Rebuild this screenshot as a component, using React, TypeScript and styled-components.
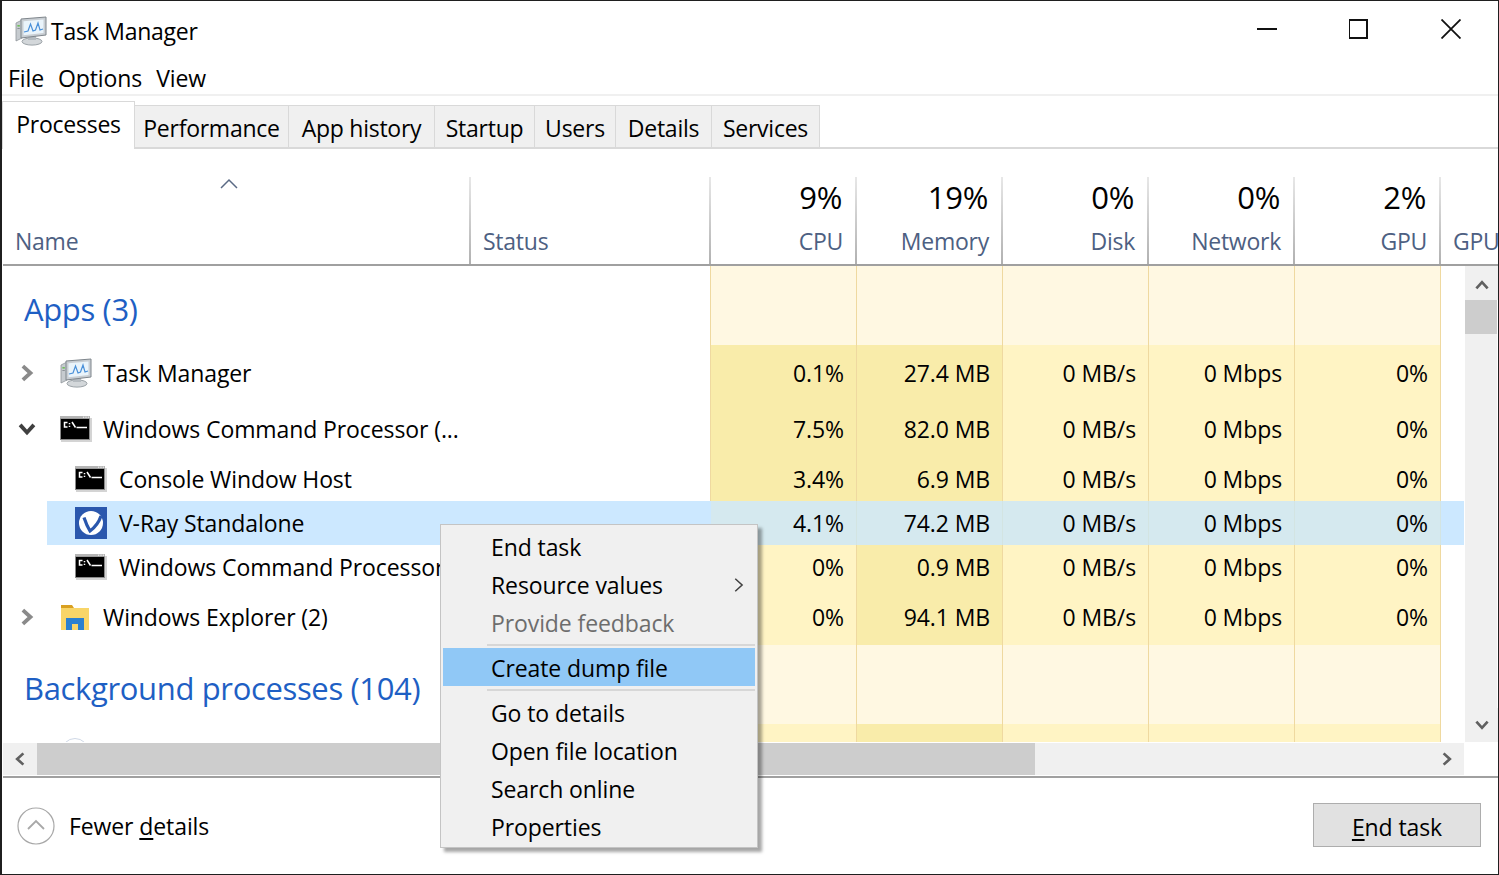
import React, { FC } from "react";
import styled, { createGlobalStyle } from "styled-components";

const GlobalStyle = createGlobalStyle`
  html, body {
    margin: 0;
    padding: 0;
    background: #fff;
  }
  * {
    box-sizing: border-box;
  }
`;

const COLUMNS = "468px 240px 146px 146px 146px 146px 146px 24px";

const Window = styled.div`
  position: relative;
  width: 1499px;
  height: 875px;
  display: flex;
  flex-direction: column;
  border: 1px solid #1f1f1f;
  border-left-width: 2px;
  background: #fff;
  overflow: hidden;
  font-family: "Open Sans", "Noto Sans", sans-serif;
  font-size: 23px;
  letter-spacing: -0.1px;
  color: #000;
`;

const TitleBar = styled.div`
  height: 59px;
  flex: none;
  display: flex;
  align-items: center;
  padding: 0 0 0 13px;
`;

const TitleText = styled.span`
  margin-left: 4px;
  letter-spacing: -0.25px;
`;

const WindowButtons = styled.div`
  margin-left: auto;
  margin-right: 1px;
  margin-bottom: 3px;
  display: flex;
`;

const WindowButton = styled.div`
  width: 92px;
  height: 40px;
  display: flex;
  align-items: center;
  justify-content: center;
`;

const MenuBar = styled.div`
  height: 36px;
  flex: none;
  display: flex;
  gap: 14px;
  padding: 2px 0 0 6px;
  align-items: center;
  border-bottom: 2px solid #f0f0f0;
`;

const TabStrip = styled.div`
  height: 53px;
  flex: none;
  display: flex;
  align-items: flex-end;
  border-bottom: 2px solid #d9d9d9;
  letter-spacing: -0.25px;
`;

const Tab = styled.div<{ $active?: boolean; $width: number }>`
  width: ${p => p.$width}px;
  height: ${p => (p.$active ? "48px" : "42px")};
  flex: none;
  display: flex;
  align-items: center;
  justify-content: center;
  background: ${p => (p.$active ? "#fff" : "#f0f0f0")};
  border-top: 1px solid #d9d9d9;
  border-right: 1px solid #d9d9d9;
  border-left: ${p => (p.$active ? "1px solid #d9d9d9" : "0")};
  margin-bottom: ${p => (p.$active ? "-2px" : "0")};
  padding-top: ${p => (p.$active ? "0" : "3px")};
  padding-bottom: ${p => (p.$active ? "3px" : "0")};
`;

const Header = styled.div`
  height: 117px;
  flex: none;
  display: grid;
  grid-template-columns: ${COLUMNS};
  border-bottom: 2px solid #a0a0a0;
  margin-left: 1px;
  padding-top: 28px;
  overflow: hidden;
  letter-spacing: -0.25px;
`;

const HeaderCell = styled.div<{ $right?: boolean; $noLine?: boolean }>`
  position: relative;
  display: flex;
  flex-direction: column;
  justify-content: flex-end;
  align-items: ${p => (p.$right ? "flex-end" : "flex-start")};
  padding: 0 12px 7px 12px;
  border-right: ${p => (p.$noLine ? "0" : "2px solid transparent")};
  border-image: ${p => (p.$noLine ? "none" : "linear-gradient(#e8e8e8, #b0b0b0) 1")};
  color: #4d6082;
  white-space: nowrap;
`;

const SortArrow = styled.svg`
  position: absolute;
  left: 216px;
  top: 1px;
`;

const Percent = styled.div`
  font-size: 31px;
  letter-spacing: -0.3px;
  color: #000;
  line-height: 40px;
  margin: 0 1px 8px 0;
`;

const Body = styled.div`
  flex: 1;
  min-height: 0;
  display: flex;
  margin-left: 1px;
`;

const RowsArea = styled.div`
  width: 1462px;
  flex: none;
  overflow: hidden;
  display: flex;
  flex-direction: column;
`;

const Row = styled.div<{ $height: number }>`
  height: ${p => p.$height}px;
  flex: none;
  display: grid;
  grid-template-columns: ${COLUMNS};
`;

const NameCell = styled.div<{ $indent: number; $selected?: boolean }>`
  grid-column: span 2;
  display: flex;
  align-items: center;
  white-space: nowrap;
  overflow: hidden;
  padding-left: ${p => p.$indent}px;
  border-right: 1px solid ${p => (p.$selected ? "#cce8ff" : "#efd9a0")};
  background: ${p =>
    p.$selected ? "linear-gradient(to right, #fff 44px, #cce8ff 44px)" : "#fff"};
`;

const GroupTitle = styled.div`
  grid-column: span 2;
  display: flex;
  align-items: center;
  padding: 7px 0 0 21px;
  font-size: 31px;
  letter-spacing: -0.35px;
  color: #1e5fc4;
  border-right: 1px solid #efd9a0;
`;

type Tone = "light" | "mid" | "strong" | "selected";

const TONES: Record<Tone, string> = {
  light: "#fff8e2",
  mid: "#fff4c4",
  strong: "#f9ecaa",
  selected: "#d5e9ef",
};

const HeatCell = styled.div<{ $tone: Tone }>`
  display: flex;
  align-items: center;
  justify-content: flex-end;
  padding-right: 12px;
  border-right: 1px solid ${p => (p.$tone === "selected" ? "#d3e4e2" : "#efd9a0")};
  background: ${p => TONES[p.$tone]};
  white-space: nowrap;
`;

const Twisty = styled.div`
  width: 44px;
  margin-left: 13px;
  display: flex;
  flex: none;
  align-items: center;
`;

const IconSlot = styled.div<{ $width: number }>`
  width: ${p => p.$width}px;
  flex: none;
  display: flex;
  align-items: center;
`;

const EdgeCell = styled.div<{ $selected?: boolean }>`
  margin-right: 1px;
  background: ${p => (p.$selected ? "#cce8ff" : "#fff")};
`;

const VScroll = styled.div`
  width: 32px;
  flex: none;
  display: flex;
  flex-direction: column;
  background: #f0f0f0;
`;

const ScrollButton = styled.div<{ $width: number; $height: number; $pushDown?: boolean }>`
  width: ${p => p.$width}px;
  height: ${p => p.$height}px;
  flex: none;
  background: #f0f0f0;
  display: flex;
  align-items: center;
  justify-content: center;
  padding-top: ${p => (p.$pushDown ? "4px" : "0")};
`;

const VTrack = styled.div`
  flex: 1;
  display: flex;
  flex-direction: column;
`;

const VThumb = styled.div`
  height: 34px;
  background: #cdcdcd;
`;

const HScrollBar = styled.div`
  height: 32px;
  flex: none;
  display: flex;
  margin-left: 1px;
  margin-top: 1px;
`;

const HTrack = styled.div`
  width: 1393px;
  background: #f0f0f0;
  display: flex;
`;

const HThumb = styled.div`
  width: 998px;
  background: #cdcdcd;
`;

const Footer = styled.div`
  height: 98px;
  flex: none;
  display: flex;
  align-items: center;
  margin-left: 1px;
  margin-top: 1px;
  border-top: 2px solid #a0a0a0;
  padding: 0 17px 0 14px;
`;

const FooterToggle = styled.div`
  display: flex;
  align-items: center;
  gap: 14px;
`;

const FooterButton = styled.div`
  margin: 0 0 2px auto;
  width: 168px;
  height: 44px;
  padding-top: 3px;
  display: flex;
  align-items: center;
  justify-content: center;
  background: #e1e1e1;
  border: 1px solid #adadad;
`;

const Access = styled.span`
  text-decoration: underline;
  text-underline-offset: 3px;
`;

const ContextMenu = styled.div`
  position: absolute;
  left: 438px;
  top: 523px;
  width: 318px;
  height: 324px;
  background: #f0f0f0;
  border: 1px solid #c4c4c4;
  box-shadow: 4px 4px 3px rgba(0, 0, 0, 0.35);
  padding: 2px;
`;

const MenuItem = styled.div<{ $disabled?: boolean; $hot?: boolean }>`
  height: 38px;
  display: flex;
  align-items: center;
  justify-content: space-between;
  padding: 2px 6px 0 48px;
  color: ${p => (p.$disabled ? "#6d6d6d" : "#000")};
  background: ${p => (p.$hot ? "#90c8f6" : "transparent")};
`;

const MenuSeparator = styled.div<{ $top: number }>`
  height: 2px;
  margin: ${p => p.$top}px 0 2px 44px;
  background: #d7d7d7;
`;

const Chevron: FC<{ dir: "up" | "down" | "left" | "right"; color?: string; size?: number; width?: number }> = ({
  dir,
  color = "#606060",
  size = 18,
  width = 2.4,
}) => {
  const points = {
    up: "3,11 8,5.5 13,11",
    down: "3,5 8,10.5 13,5",
    left: "11,3 5.5,8 11,13",
    right: "5,3 10.5,8 5,13",
  }[dir];
  return (
    <svg width={size} height={size} viewBox="0 0 16 16">
      <polyline points={points} fill="none" stroke={color} strokeWidth={width} />
    </svg>
  );
};

const MonitorIcon: FC = () => (
  <svg width="32" height="30" viewBox="0 0 32 30">
    <ellipse cx="17" cy="25.5" rx="10" ry="3.6" fill="#d3d7da" stroke="#9aa1a6" />
    <rect x="13" y="19" width="8" height="5" fill="#b4babf" />
    <path d="M1 7 L7 4 V22 L1 25 Z" fill="#c6cbcf" stroke="#8f969b" strokeWidth="0.8" />
    <rect x="2.4" y="9" width="2.4" height="1.6" fill="#6fbf5a" />
    <rect x="2.4" y="12" width="2.4" height="1" fill="#8a9095" />
    <path d="M6 3 L31 1 V19 L6 22 Z" fill="#c9ced3" stroke="#7f868c" />
    <path d="M8.5 5.2 L28.5 3.6 V17 L8.5 19.2 Z" fill="#eaf4fb" />
    <polyline
      points="9,16 13,15 15.5,8 18,15 20.5,14 23,7 25,14 28,13"
      fill="none"
      stroke="#4a90d9"
      strokeWidth="1.2"
    />
  </svg>
);

const ConsoleIcon: FC = () => (
  <svg width="32" height="26" viewBox="0 0 32 26">
    <rect x="1" y="2" width="31" height="24" fill="#d4d4d4" />
    <rect x="0" y="0" width="30" height="24" fill="#8a8a8a" />
    <rect x="0" y="0" width="30" height="2.4" fill="#b5b5b5" />
    <rect x="1" y="3" width="28" height="20" fill="#000" />
    <rect x="23" y="0.6" width="1.2" height="1.2" fill="#eee" />
    <rect x="25.4" y="0.6" width="1.2" height="1.2" fill="#eee" />
    <rect x="27.8" y="0.6" width="1.2" height="1.2" fill="#eee" />
    <path
      d="M7.5 6.5 H4.5 V11 H7.5 M9.5 7 V8.2 M9.5 9.8 V11 M12 6 L15.5 11.5 M16.5 11.5 H27"
      fill="none"
      stroke="#fff"
      strokeWidth="1.5"
    />
  </svg>
);

const VRayIcon: FC = () => (
  <svg width="32" height="32" viewBox="0 0 32 32">
    <rect width="32" height="32" fill="#2a57ad" />
    <circle cx="16" cy="16" r="12" fill="#fff" />
    <path d="M9 10.5 C10.5 15 12.5 20 15 24 C19 21 24 15 26 9" fill="none" stroke="#2a57ad" strokeWidth="3.2" />
  </svg>
);

const FolderIcon: FC = () => (
  <svg width="30" height="26" viewBox="0 0 30 26">
    <path d="M1 1 H12 L14 4 H1 Z" fill="#d9a021" />
    <rect x="1" y="4" width="28" height="22" fill="#f8d568" />
    <path d="M6 26 V14 H24 V26 H18 V20 H12 V26 Z" fill="#2a80d0" />
  </svg>
);

const CircleIcon: FC = () => (
  <svg width="30" height="30" viewBox="0 0 30 30">
    <circle cx="15" cy="15" r="13.5" fill="#fff" stroke="#cfd8e6" />
    <path d="M9 6 H11 M14 6 H16 M19 6 H21" stroke="#a8d8c0" strokeWidth="1.2" />
  </svg>
);

type Kind = "monitor" | "console" | "vray" | "folder" | "circle";

const ICONS: Record<Kind, FC> = {
  monitor: MonitorIcon,
  console: ConsoleIcon,
  vray: VRayIcon,
  folder: FolderIcon,
  circle: CircleIcon,
};

type Process = {
  name: string;
  height: number;
  icon: Kind;
  twisty?: "right" | "down";
  child?: boolean;
  selected?: boolean;
  values: string[];
};

const processes: Process[] = [
  { name: "Task Manager", height: 56, icon: "monitor", twisty: "right", values: ["0.1%", "27.4 MB", "0 MB/s", "0 Mbps", "0%"] },
  { name: "Windows Command Processor (...", height: 56, icon: "console", twisty: "down", values: ["7.5%", "82.0 MB", "0 MB/s", "0 Mbps", "0%"] },
  { name: "Console Window Host", height: 44, icon: "console", child: true, values: ["3.4%", "6.9 MB", "0 MB/s", "0 Mbps", "0%"] },
  { name: "V-Ray Standalone", height: 44, icon: "vray", child: true, selected: true, values: ["4.1%", "74.2 MB", "0 MB/s", "0 Mbps", "0%"] },
  { name: "Windows Command Processor", height: 44, icon: "console", child: true, values: ["0%", "0.9 MB", "0 MB/s", "0 Mbps", "0%"] },
  { name: "Windows Explorer (2)", height: 56, icon: "folder", twisty: "right", values: ["0%", "94.1 MB", "0 MB/s", "0 Mbps", "0%"] },
];

const headers = [
  { percent: "9%", label: "CPU" },
  { percent: "19%", label: "Memory" },
  { percent: "0%", label: "Disk" },
  { percent: "0%", label: "Network" },
  { percent: "2%", label: "GPU" },
];

const tabs = [
  { label: "Processes", width: 133 },
  { label: "Performance", width: 154 },
  { label: "App history", width: 146 },
  { label: "Startup", width: 100 },
  { label: "Users", width: 81 },
  { label: "Details", width: 96 },
  { label: "Services", width: 108 },
];

const toneFor = (column: number, value: string): Tone => {
  if (column === 1) return "strong";
  if (column === 0 && value && value !== "0%") return "strong";
  return "mid";
};

const GroupRow: FC<{ title: string }> = ({ title }) => (
  <Row $height={79}>
    <GroupTitle>{title}</GroupTitle>
    {headers.map(h => (
      <HeatCell key={h.label} $tone="light" />
    ))}
    <EdgeCell />
  </Row>
);

const ProcessRow: FC<{ process: Process }> = ({ process }) => {
  const Icon = ICONS[process.icon];
  return (
    <Row $height={process.height}>
      <NameCell $indent={process.child ? 72 : 0} $selected={process.selected}>
        {!process.child && (
          <Twisty>
            {process.twisty && (
              <Chevron
                dir={process.twisty}
                size={22}
                width={2.8}
                color={process.twisty === "down" ? "#404040" : "#8a8a8a"}
              />
            )}
          </Twisty>
        )}
        <IconSlot $width={process.child ? 44 : 43}>
          <Icon />
        </IconSlot>
        {process.name}
      </NameCell>
      {process.values.map((value, i) => (
        <HeatCell key={i} $tone={process.selected ? "selected" : toneFor(i, value)}>
          {value}
        </HeatCell>
      ))}
      <EdgeCell $selected={process.selected} />
    </Row>
  );
};

const App: FC = () => (
  <Window>
    <GlobalStyle />
    <TitleBar>
      <MonitorIcon />
      <TitleText>Task Manager</TitleText>
      <WindowButtons>
        <WindowButton>
          <svg width="20" height="20" viewBox="0 0 20 20">
            <rect y="9" width="20" height="2" fill="#111" />
          </svg>
        </WindowButton>
        <WindowButton>
          <svg width="20" height="20" viewBox="0 0 20 20">
            <rect x="0" y="1" width="18" height="18" fill="none" stroke="#111" strokeWidth="2" />
          </svg>
        </WindowButton>
        <WindowButton>
          <svg width="20" height="20" viewBox="0 0 20 20">
            <path d="M0.5 0.5 L19.5 19.5 M19.5 0.5 L0.5 19.5" stroke="#111" strokeWidth="1.8" />
          </svg>
        </WindowButton>
      </WindowButtons>
    </TitleBar>
    <MenuBar>
      <span>File</span>
      <span>Options</span>
      <span>View</span>
    </MenuBar>
    <TabStrip>
      {tabs.map((tab, i) => (
        <Tab key={tab.label} $active={i === 0} $width={tab.width}>
          {tab.label}
        </Tab>
      ))}
    </TabStrip>
    <Header>
      <HeaderCell>
        <SortArrow width="20" height="12" viewBox="0 0 20 12">
          <polyline points="2,10 10,2 18,10" fill="none" stroke="#5a6a85" strokeWidth="1.5" />
        </SortArrow>
        Name
      </HeaderCell>
      <HeaderCell>Status</HeaderCell>
      {headers.map(h => (
        <HeaderCell key={h.label} $right>
          <Percent>{h.percent}</Percent>
          {h.label}
        </HeaderCell>
      ))}
      <HeaderCell $noLine>GPU</HeaderCell>
    </Header>
    <Body>
      <RowsArea>
        <GroupRow title="Apps (3)" />
        {processes.map(p => (
          <ProcessRow key={p.name} process={p} />
        ))}
        <GroupRow title="Background processes (104)" />
        <ProcessRow process={{ name: "", height: 56, icon: "circle", twisty: "right", values: ["", "", "", "", ""] }} />
      </RowsArea>
      <VScroll>
        <ScrollButton $width={34} $height={34} $pushDown>
          <Chevron dir="up" />
        </ScrollButton>
        <VTrack>
          <VThumb />
        </VTrack>
        <ScrollButton $width={34} $height={34}>
          <Chevron dir="down" />
        </ScrollButton>
      </VScroll>
    </Body>
    <HScrollBar>
      <ScrollButton $width={34} $height={32}>
        <Chevron dir="left" />
      </ScrollButton>
      <HTrack>
        <HThumb />
      </HTrack>
      <ScrollButton $width={34} $height={32}>
        <Chevron dir="right" />
      </ScrollButton>
    </HScrollBar>
    <Footer>
      <FooterToggle>
        <svg width="38" height="38" viewBox="0 0 38 38">
          <circle cx="19" cy="19" r="18" fill="#fff" stroke="#a8a8a8" strokeWidth="1.2" />
          <polyline points="11,22 19,14 27,22" fill="none" stroke="#a8a8a8" strokeWidth="1.8" />
        </svg>
        <span>
          Fewer <Access>d</Access>etails
        </span>
      </FooterToggle>
      <FooterButton>
        <span>
          <Access>E</Access>nd task
        </span>
      </FooterButton>
    </Footer>
    <ContextMenu>
      <MenuItem>End task</MenuItem>
      <MenuItem>
        Resource values
        <Chevron dir="right" color="#404040" size={20} width={1.2} />
      </MenuItem>
      <MenuItem $disabled>Provide feedback</MenuItem>
      <MenuSeparator $top={3} />
      <MenuItem $hot>Create dump file</MenuItem>
      <MenuSeparator $top={3} />
      <MenuItem>Go to details</MenuItem>
      <MenuItem>Open file location</MenuItem>
      <MenuItem>Search online</MenuItem>
      <MenuItem>Properties</MenuItem>
    </ContextMenu>
  </Window>
);

export default App;
